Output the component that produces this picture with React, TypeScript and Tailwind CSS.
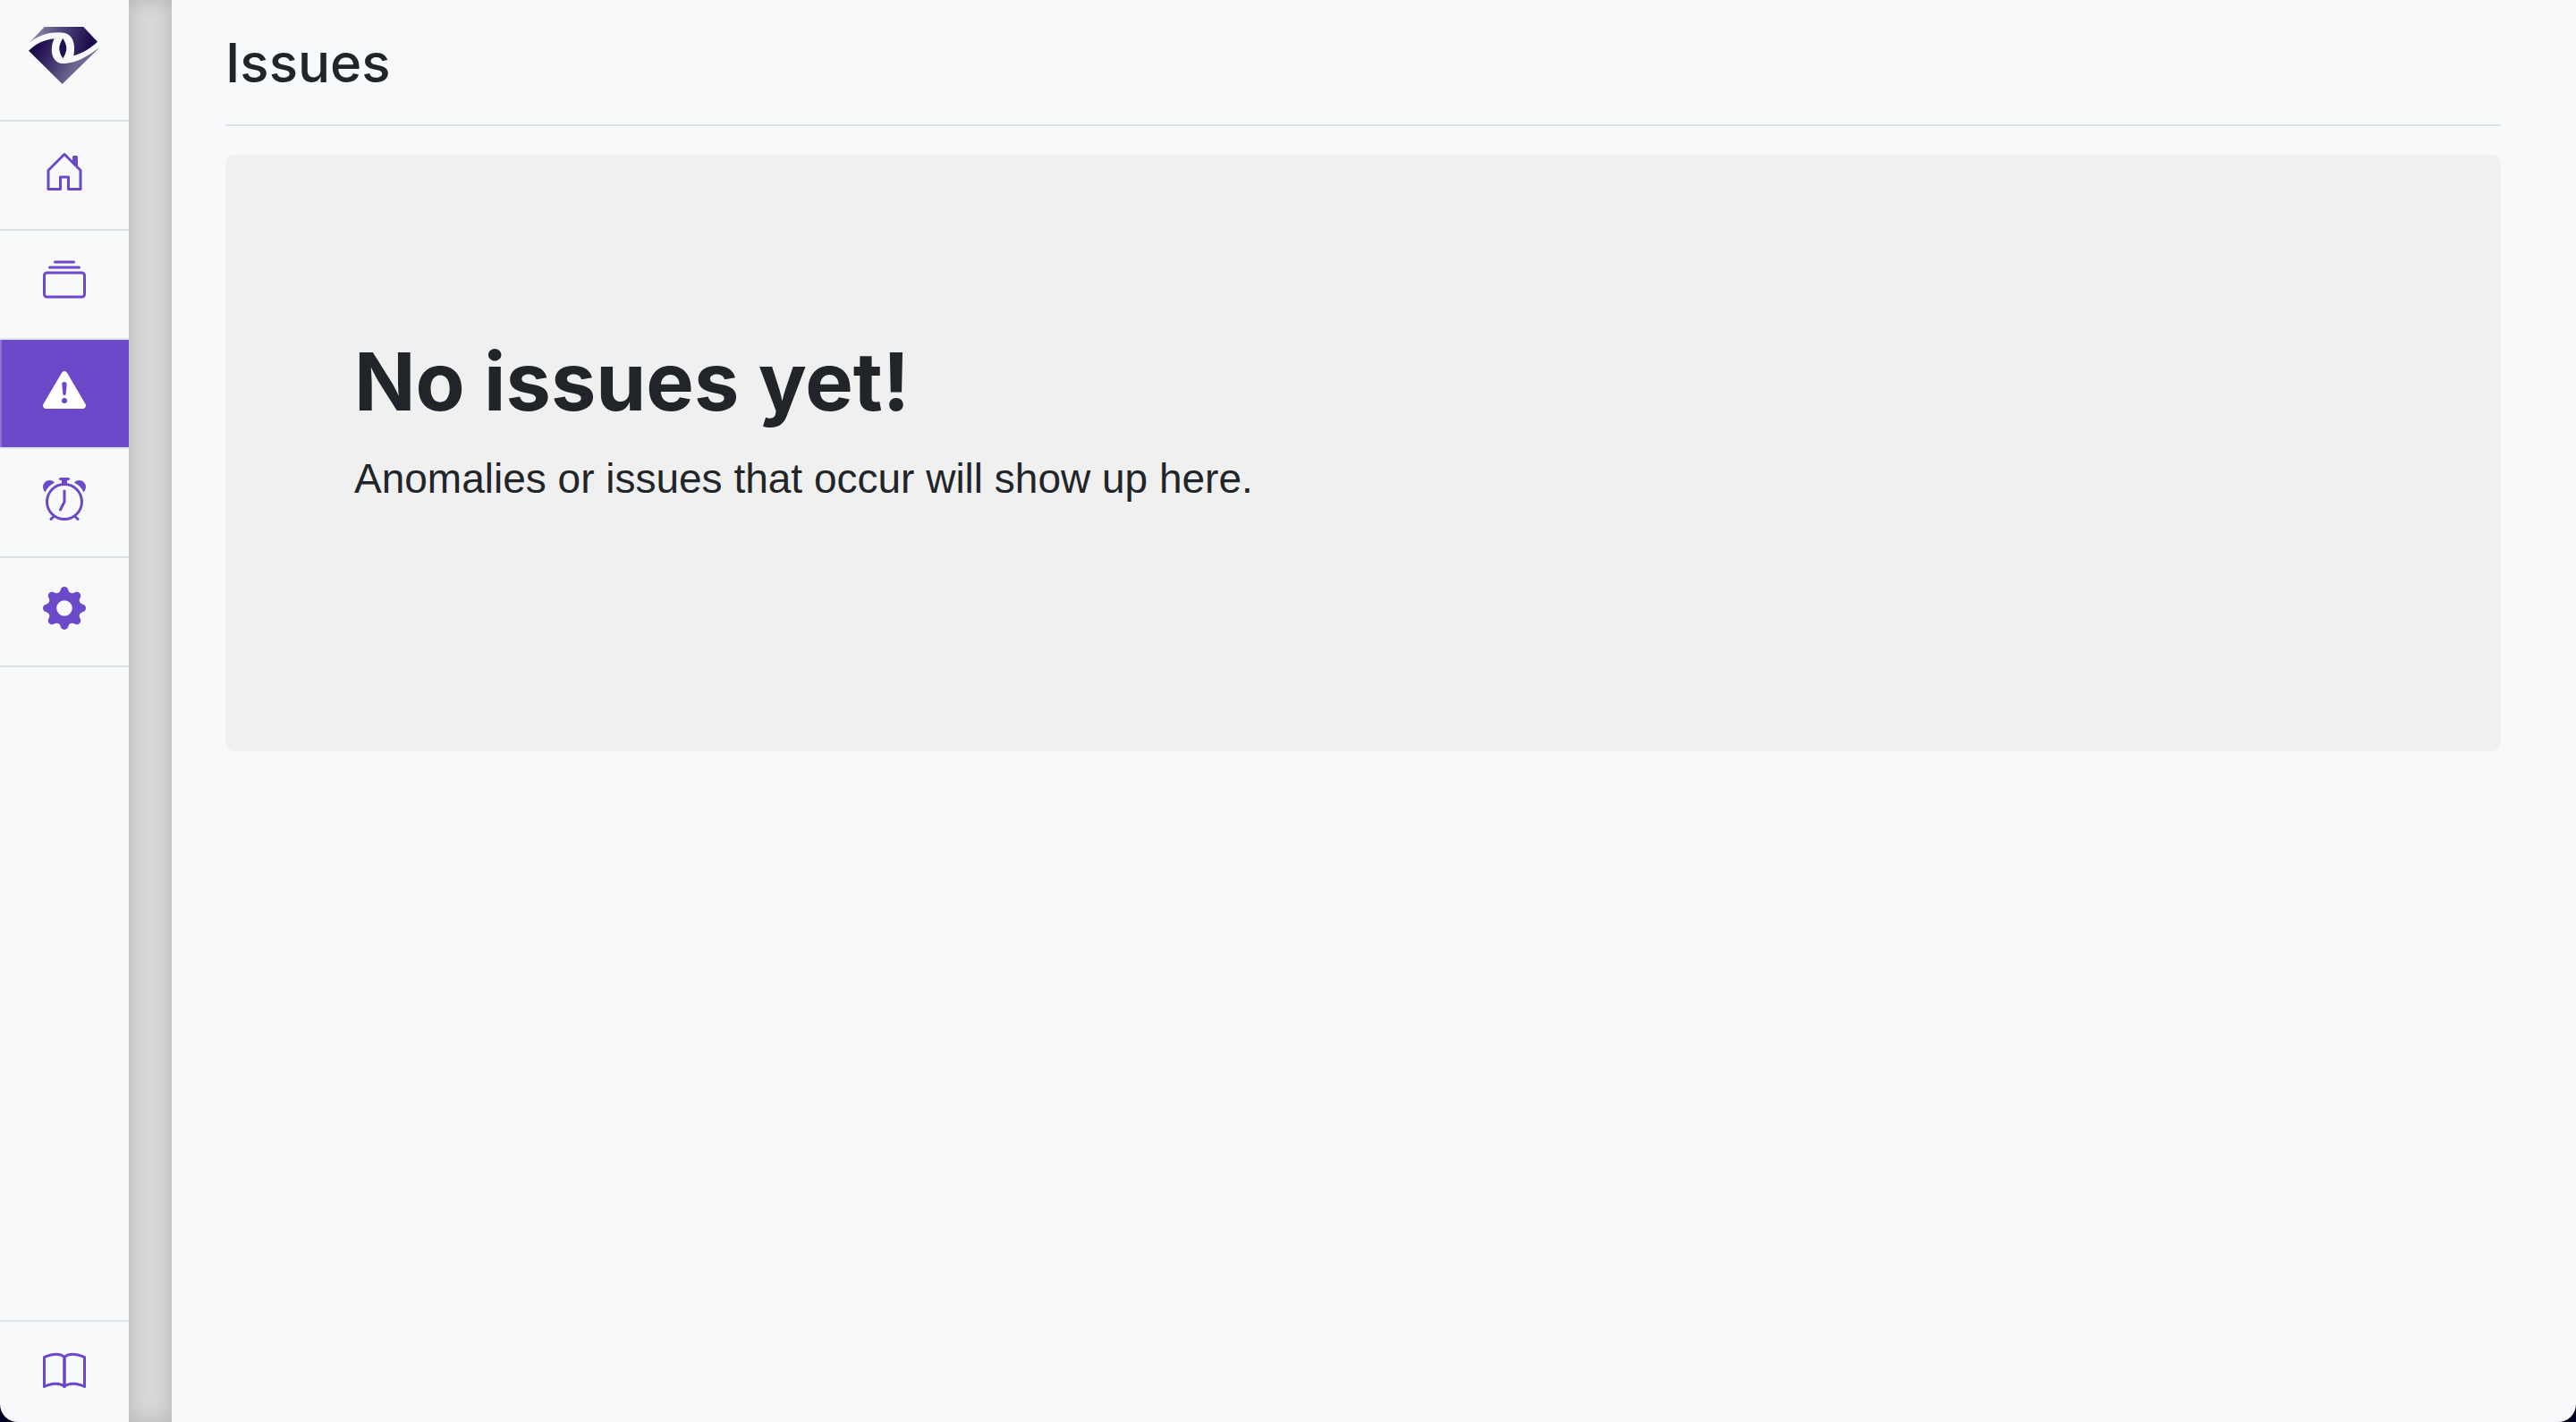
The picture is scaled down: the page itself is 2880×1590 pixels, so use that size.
import type { ReactNode } from "react";

function Icon({ children }: { children: ReactNode }) {
  return (
    <svg viewBox="0 0 16 16" className="size-12" fill="currentColor" fillRule="evenodd" clipRule="evenodd" aria-hidden="true">
      {children}
    </svg>
  );
}

const HouseIcon = () => (
  <Icon>
    <path d="M7.646 1.146a.5.5 0 0 1 .708 0l6 6a.5.5 0 0 1 .146.354v7a.5.5 0 0 1-.5.5H9.5a.5.5 0 0 1-.5-.5v-4H7v4a.5.5 0 0 1-.5.5H2a.5.5 0 0 1-.5-.5v-7a.5.5 0 0 1 .146-.354l6-6zM2.5 7.707V14H6v-4a.5.5 0 0 1 .5-.5h3a.5.5 0 0 1 .5.5v4h3.5V7.707L8 2.207l-5.5 5.5z" />
    <path d="M13 2.5V6.4l-2-2V2.5a.5.5 0 0 1 .5-.5h1a.5.5 0 0 1 .5.5z" />
  </Icon>
);

const CollectionIcon = () => (
  <Icon>
    <path d="M14.5 13.5h-13A.5.5 0 0 1 1 13V6a.5.5 0 0 1 .5-.5h13a.5.5 0 0 1 .5.5v7a.5.5 0 0 1-.5.5zm-13 1A1.5 1.5 0 0 1 0 13V6a1.5 1.5 0 0 1 1.5-1.5h13A1.5 1.5 0 0 1 16 6v7a1.5 1.5 0 0 1-1.5 1.5h-13zM2 3a.5.5 0 0 0 .5.5h11a.5.5 0 0 0 0-1h-11A.5.5 0 0 0 2 3zm2-2a.5.5 0 0 0 .5.5h7a.5.5 0 0 0 0-1h-7A.5.5 0 0 0 4 1z" />
  </Icon>
);

const WarningIcon = () => (
  <Icon>
    <path d="M8.982 1.566a1.13 1.13 0 0 0-1.96 0L.165 13.233c-.457.778.091 1.767.98 1.767h13.713c.889 0 1.438-.99.98-1.767L8.982 1.566zM8 5c.535 0 .954.462.9.995l-.35 3.507a.552.552 0 0 1-1.1 0L7.1 5.995A.905.905 0 0 1 8 5zm.002 6a1 1 0 1 1 0 2 1 1 0 0 1 0-2z" />
  </Icon>
);

const AlarmIcon = () => (
  <Icon>
    <path d="M8 15A6 6 0 1 0 8 3a6 6 0 0 0 0 12zm0 1A7 7 0 1 0 8 2a7 7 0 0 0 0 14z" />
    <path d="M8 4.5a.5.5 0 0 1 .5.5v4a.5.5 0 0 1-.053.224l-1.5 3a.5.5 0 1 1-.894-.448L7.5 8.882V5a.5.5 0 0 1 .5-.5z" />
    <path d="M.86 5.387A2.5 2.5 0 1 1 4.387 1.86 8.035 8.035 0 0 0 .86 5.387zM11.613 1.86a2.5 2.5 0 1 1 3.527 3.527 8.035 8.035 0 0 0-3.527-3.527z" />
    <path d="M11.646 14.146a.5.5 0 0 1 .708 0l1 1a.5.5 0 0 1-.708.708l-1-1a.5.5 0 0 1 0-.708zm-7.292 0a.5.5 0 0 0-.708 0l-1 1a.5.5 0 0 0 .708.708l1-1a.5.5 0 0 0 0-.708zM6 .5A.5.5 0 0 1 6.500 0h3a.5.5 0 0 1 0 1h-3A.5.5 0 0 1 6 .5z" />
    <path d="M7 1h2v2H7V1z" />
  </Icon>
);

const GearIcon = () => (
  <Icon>
    <path d="M9.405 1.05c-.413-1.4-2.397-1.4-2.81 0l-.1.34a1.464 1.464 0 0 1-2.105.872l-.31-.17c-1.283-.698-2.686.705-1.987 1.987l.169.311c.446.82.023 1.841-.872 2.105l-.34.1c-1.4.413-1.4 2.397 0 2.81l.34.1a1.464 1.464 0 0 1 .872 2.105l-.17.31c-.698 1.283.705 2.686 1.987 1.987l.311-.169a1.464 1.464 0 0 1 2.105.872l.1.34c.413 1.4 2.397 1.4 2.81 0l.1-.34a1.464 1.464 0 0 1 2.105-.872l.31.17c1.283.698 2.686-.705 1.987-1.987l-.169-.311a1.464 1.464 0 0 1 .872-2.105l.34-.1c1.4-.413 1.4-2.397 0-2.81l-.34-.1a1.464 1.464 0 0 1-.872-2.105l.17-.31c.698-1.283-.705-2.686-1.987-1.987l-.311.169a1.464 1.464 0 0 1-2.105-.872l-.1-.34zM8 10.93a2.929 2.929 0 1 1 0-5.86 2.929 2.929 0 0 1 0 5.858z" />
  </Icon>
);

const bookPage =
  "M3.214 1.072C4.813.752 6.916.71 8.354 2.146A.5.5 0 0 1 8.5 2.5v11a.5.5 0 0 1-.854.354c-.843-.844-2.115-1.059-3.47-.92-1.344.14-2.66.617-3.452 1.013A.5.5 0 0 1 0 13.5v-11a.5.5 0 0 1 .276-.447 12.958 12.958 0 0 1 2.938-.981zM1 2.82v9.908c.846-.343 1.944-.672 3.074-.788 1.143-.118 2.387-.023 3.426.56V2.718c-1.063-.929-2.631-.956-4.09-.664A11.958 11.958 0 0 0 1 2.82z";

const BookIcon = () => (
  <Icon>
    <path d={bookPage} />
    <path d={bookPage} transform="matrix(-1 0 0 1 16 0)" />
  </Icon>
);

const Logo = () => (
  <svg viewBox="0 0 80 66" className="h-[66px] w-20 overflow-visible" aria-hidden="true">
    <defs>
      <linearGradient id="gem-top" gradientUnits="userSpaceOnUse" x1="4" y1="10" x2="68" y2="30">
        <stop offset="0" stopColor="#958fae" />
        <stop offset="0.45" stopColor="#54497c" />
        <stop offset="1" stopColor="#1c0b4c" />
      </linearGradient>
      <linearGradient id="gem-bottom" gradientUnits="userSpaceOnUse" x1="10" y1="26" x2="52" y2="50">
        <stop offset="0" stopColor="#1c0b4c" />
        <stop offset="0.5" stopColor="#43376f" />
        <stop offset="1" stopColor="#6f678f" />
      </linearGradient>
    </defs>
    <path fill="url(#gem-top)" d="M2 19.500 19.700 1H63.300L79 17.700C70 26 61 31 52.300 33.300C54.500 23 53 8 39 7.500C24 6.500 12 11 2 19.500z" />
    <path fill="url(#gem-bottom)" d="M2 27.700C10 20 19 15.500 30.700 14.300C27 21 27 31 30 36C33 41 37 42.500 43 42C56 41 68 34 81.500 24L39.700 65z" />
    <path fill="#21104f" d="M40.300 13.700C43 18 44.300 22 44.300 25C44.300 28 43 32 40.300 36.300C37.500 32 36.300 28 36.300 25C36.300 22 37.500 18 40.300 13.700z" />
  </svg>
);

const items = [
  { label: "Home", icon: <HouseIcon /> },
  { label: "Collections", icon: <CollectionIcon /> },
  { label: "Issues", icon: <WarningIcon />, active: true },
  { label: "Schedules", icon: <AlarmIcon /> },
  { label: "Settings", icon: <GearIcon /> },
];

export default function App() {
  return (
    <div className="min-h-screen bg-[#07001f] font-['Inter',sans-serif] text-[#212529]">
      <div className="flex min-h-screen overflow-hidden rounded-b-[20px] bg-[#f8f9fb]">
        <nav aria-label="Main" className="flex w-36 shrink-0 flex-col text-[#6b49c8]">
          <a href="#" aria-label="Dashboard" className="flex justify-center border-b-2 border-[#dfe1e8] pt-[29px] pb-[39px] pr-1">
            <Logo />
          </a>
          {items.map(({ label, icon, active }) => (
            <a
              key={label}
              href={"#" + label.toLowerCase()}
              aria-label={label}
              aria-current={active ? "page" : undefined}
              className={
                active
                  ? "flex justify-center border-b-2 border-[#dfe1e8] bg-[#6b49c8] pt-8 pb-10 text-white shadow-[inset_2px_0_0_#8a6fd4]"
                  : "flex justify-center border-b-2 border-[#dfe1e8] pt-8 pb-10"
              }
            >
              {icon}
            </a>
          ))}
          <a href="#docs" aria-label="Documentation" className="mt-auto flex justify-center border-t-2 border-[#dfe1e8] py-8">
            <BookIcon />
          </a>
        </nav>
        <div className="w-12 shrink-0 bg-[#d9dadb] shadow-[inset_0_0_24px_rgba(0,0,0,0.18)]" />
        <main className="flex-1 pt-8 pr-[84px] pl-[60px]">
          <h1 className="border-b-2 border-[#dfe1e8] pb-[30px] text-6xl leading-[77px] font-medium">Issues</h1>
          <section className="mt-8 rounded-[10px] bg-[#f0f0f0] px-36 pt-[194px] pb-[269px]">
            <h2 className="text-[90px] leading-[120px] font-bold">No issues yet!</h2>
            <p className="mt-3 font-['Liberation_Sans',sans-serif] text-[46px] leading-[72px]">
              Anomalies or issues that occur will show up here.
            </p>
          </section>
        </main>
      </div>
    </div>
  );
}
